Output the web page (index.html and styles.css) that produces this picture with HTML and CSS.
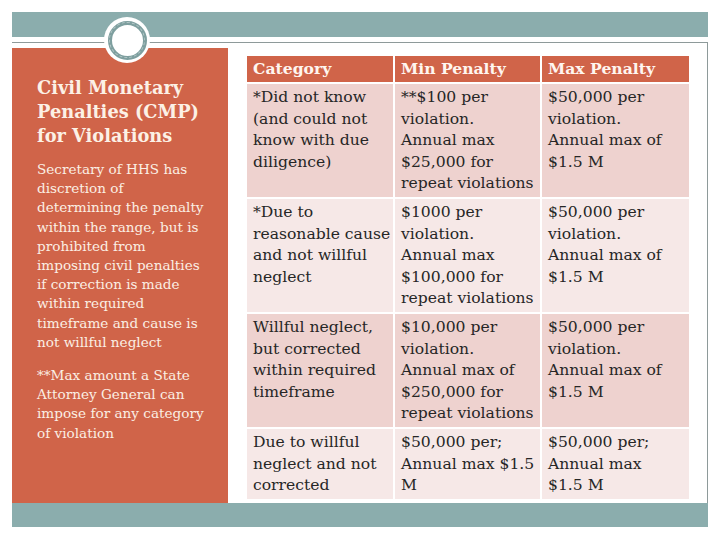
FILE: index.html
```html
<!DOCTYPE html>
<html>
<head>
<meta charset="utf-8">
<link rel="stylesheet" href="styles.css">
</head>
<body>
<div class="slide">
  <div class="topbar"></div>
  <div class="badge"><div class="ring"></div></div>
  <div class="frame">
    <aside class="side">
      <h1 class="title">Civil Monetary<br>Penalties (CMP)<br>for Violations</h1>
      <p class="note">Secretary of HHS has<br>discretion of<br>determining the penalty<br>within the range, but is<br>prohibited from<br>imposing civil penalties<br>if correction is made<br>within required<br>timeframe and cause is<br>not willful neglect</p>
      <p class="note">**Max amount a State<br>Attorney General can<br>impose for any category<br>of violation</p>
    </aside>
    <main class="content">
      <table class="pen">
        <thead>
          <tr><th>Category</th><th>Min Penalty</th><th>Max Penalty</th></tr>
        </thead>
        <tbody>
          <tr class="dark">
            <td>*Did not know<br>(and could not<br>know with due<br>diligence)</td>
            <td>**$100 per<br>violation.<br>Annual max<br>$25,000 for<br>repeat violations</td>
            <td>$50,000 per<br>violation.<br>Annual max of<br>$1.5 M</td>
          </tr>
          <tr class="light">
            <td>*Due to<br>reasonable cause<br>and not willful<br>neglect</td>
            <td>$1000 per<br>violation.<br>Annual max<br>$100,000 for<br>repeat violations</td>
            <td>$50,000 per<br>violation.<br>Annual max of<br>$1.5 M</td>
          </tr>
          <tr class="dark">
            <td>Willful neglect,<br>but corrected<br>within required<br>timeframe</td>
            <td>$10,000 per<br>violation.<br>Annual max of<br>$250,000 for<br>repeat violations</td>
            <td>$50,000 per<br>violation.<br>Annual max of<br>$1.5 M</td>
          </tr>
          <tr class="light">
            <td>Due to willful<br>neglect and not<br>corrected</td>
            <td>$50,000 per;<br>Annual max $1.5<br>M</td>
            <td>$50,000 per;<br>Annual max<br>$1.5 M</td>
          </tr>
        </tbody>
      </table>
    </main>
  </div>
  <div class="bottombar"></div>
</div>
</body>
</html>
```
FILE: styles.css
```css
html, body {
  margin: 0;
  padding: 0;
  background: #ffffff;
}
.slide {
  position: relative;
  width: 720px;
  height: 540px;
  padding-top: 12px;
  box-sizing: border-box;
}
.topbar {
  margin-left: 12px;
  width: 696px;
  height: 25px;
  background: #8badad;
}
.badge {
  position: absolute;
  left: 104px;
  top: 17px;
  width: 46px;
  height: 46px;
  border-radius: 50%;
  background: #ffffff;
  display: flex;
  align-items: center;
  justify-content: center;
}
.ring {
  width: 31px;
  height: 31px;
  border-radius: 50%;
  border: 4.5px solid #7e9f9f;
  background: #ffffff;
  position: relative;
}
.ring::after {
  content: "";
  position: absolute;
  left: -2.5px;
  top: -2.5px;
  right: -2.5px;
  bottom: -2.5px;
  border-radius: 50%;
  border: 1px dashed rgba(255,255,255,0.4);
}
.frame {
  margin-top: 5px;
  margin-left: 12px;
  width: 696px;
  height: 461px;
  box-sizing: border-box;
  border-top: 1px solid #8e9a9a;
  border-right: 1px solid #8e9a9a;
  padding-top: 5px;
  display: flex;
}
.side {
  width: 216px;
  height: 455px;
  background: #d06449;
  color: #fbefe4;
  padding: 28px 0 0 25px;
  box-sizing: border-box;
  font-family: "DejaVu Serif", serif;
}
.title {
  margin: 0 0 12px;
  font-size: 17.8px;
  line-height: 24px;
  font-weight: bold;
  color: #fcf1e6;
}
.note {
  margin: 0 0 14px;
  font-size: 13.6px;
  line-height: 19.2px;
  font-weight: normal;
}
.content {
  padding: 6px 0 0 17px;
}
.pen {
  border-collapse: separate;
  border-spacing: 2px;
  font-family: "DejaVu Serif", serif;
  font-size: 15.6px;
  line-height: 21.6px;
  color: #262626;
}
.pen th, .pen td {
  text-align: left;
  vertical-align: top;
  padding: 3px 0 2px 6px;
  white-space: nowrap;
}
.pen th {
  background: #d06449;
  color: #fff6f0;
  font-weight: bold;
  padding: 2px 0 2px 6px;
  line-height: 22px;
}
.pen th:nth-child(1), .pen td:nth-child(1) { width: 140px; }
.pen th:nth-child(2), .pen td:nth-child(2) { width: 139px; }
.pen th:nth-child(3), .pen td:nth-child(3) { width: 141px; }
.pen tr.dark td { background: #eed2cf; }
.pen tr.light td { background: #f6e8e7; }
.bottombar {
  margin-left: 12px;
  width: 696px;
  height: 24px;
  background: #8badad;
}
```
